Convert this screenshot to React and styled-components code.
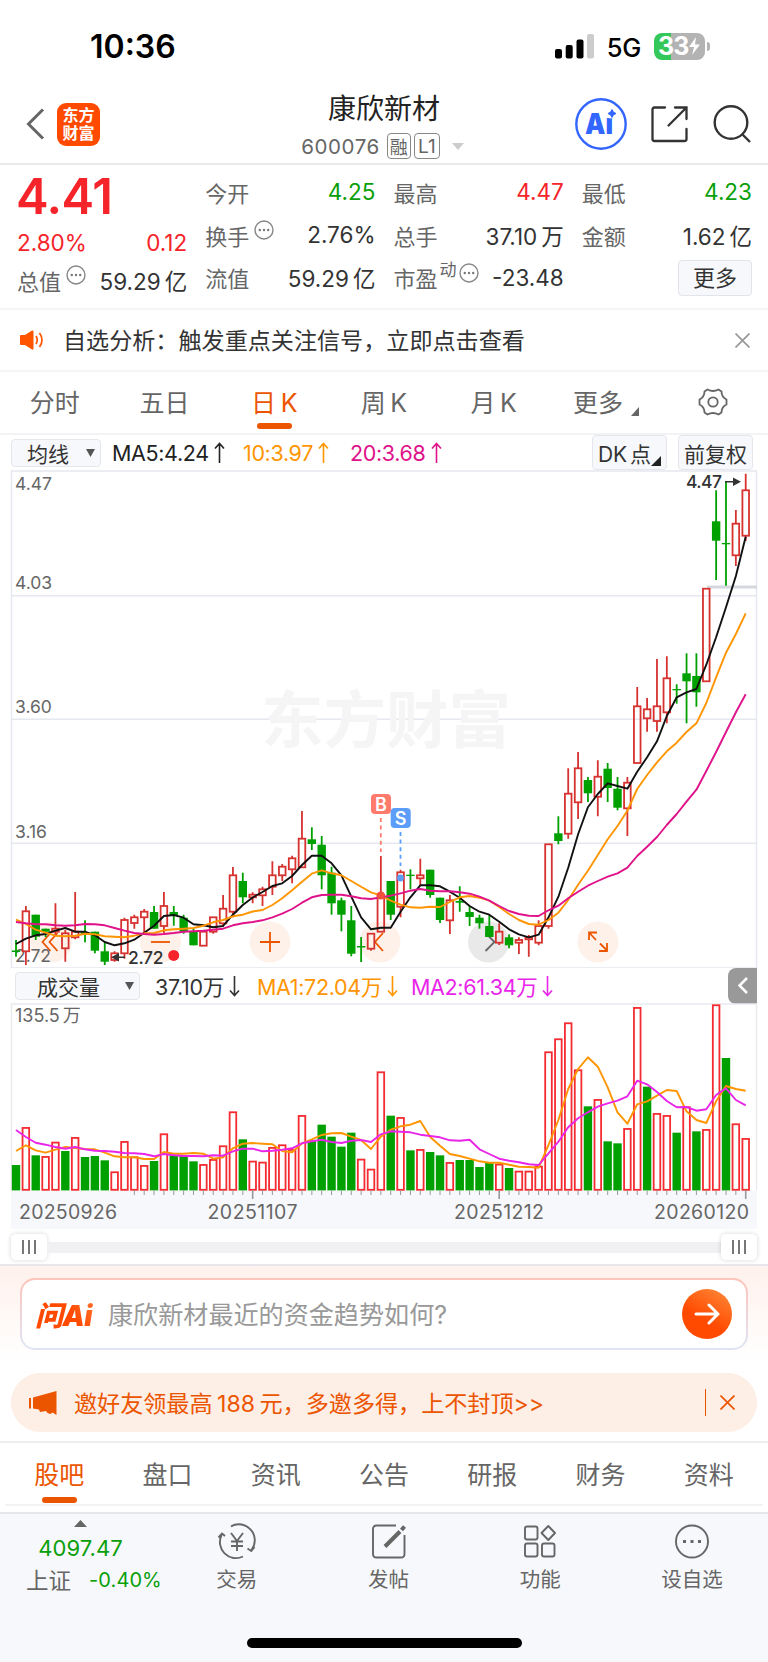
import React from 'react';
import styled, { createGlobalStyle } from 'styled-components';

const GlobalStyle = createGlobalStyle`
  * {
    box-sizing: border-box;
  }
  body {
    margin: 0;
    background: #fff;
    font-family: Inter, "Noto Sans CJK SC", sans-serif;
    color: #333;
  }
  svg {
    display: block;
    flex: none;
  }
`;

const RED = '#f5242a';
const GREEN = '#0a9f0a';
const ORANGE = '#ec5500';

const Page = styled.div`
  width: 768px;
  height: 1662px;
  overflow: hidden;
  display: flex;
  flex-direction: column;
`;

/* ---------- status bar ---------- */

const StatusBar = styled.div`
  height: 92px;
  padding: 0 58px 0 90px;
  display: flex;
  align-items: center;
  flex: none;
  color: #000;
`;

const Clock = styled.div`
  font-size: 32px;
  font-weight: 600;
  letter-spacing: 0;
  margin-right: auto;
`;

const Network = styled.div`
  font-size: 25.5px;
  font-weight: 500;
  letter-spacing: -0.3px;
  margin: 2px 13px 0 13px;
`;

const Battery = styled.div`
  width: 51px;
  height: 27px;
  border-radius: 8px;
  background: linear-gradient(90deg, #34c759 17px, #b3b3b3 17px);
  color: #fff;
  font-size: 25px;
  font-weight: 700;
  letter-spacing: -1px;
  display: flex;
  align-items: center;
  padding-left: 4px;
`;

const BatteryTip = styled.div`
  width: 3px;
  height: 9px;
  margin-left: 2px;
  border-radius: 0 3px 3px 0;
  background: #b3b3b3;
`;

/* ---------- header ---------- */

const Header = styled.header`
  height: 73px;
  flex: none;
  display: grid;
  grid-template-columns: 232px 1fr 232px;
  border-bottom: 2px solid #ebebed;
`;

const HeaderSide = styled.div`
  display: flex;
  align-items: center;
  height: 64px;
  padding: ${(p) => (p.$right ? '0 17px 0 39px' : '0 0 0 26px')};
  gap: ${(p) => (p.$right ? '24px' : '12px')};
`;

const Logo = styled.div`
  width: 43px;
  height: 43px;
  border-radius: 9px;
  background: #ff4a00;
  color: #fff;
  font-size: 16px;
  line-height: 18px;
  font-weight: 700;
  display: flex;
  align-items: center;
  justify-content: center;
  text-align: center;
`;

const TitleBlock = styled.div`
  display: flex;
  flex-direction: column;
  align-items: center;
`;

const Title = styled.h1`
  margin: 0;
  font-size: 28px;
  line-height: 35px;
  font-weight: 400;
  color: #222;
`;

const Code = styled.div`
  display: flex;
  align-items: center;
  height: 30px;
  margin-top: 4px;
  margin-right: 2px;
  gap: 3px;
  font-size: 20.5px;
  color: #666;
  letter-spacing: 0.6px;
`;

const Tag = styled.span`
  height: 26px;
  width: ${(p) => p.$w}px;
  margin-left: ${(p) => p.$ml || 0}px;
  border: 1.5px solid #888;
  border-radius: 4px;
  font-size: ${(p) => p.$size}px;
  display: flex;
  align-items: center;
  justify-content: center;
  letter-spacing: 0;
`;

/* ---------- quote ---------- */

const Quote = styled.section`
  height: 145px;
  flex: none;
  padding: 5px 16px 0 17px;
  display: grid;
  grid-template-columns: repeat(4, 1fr);
  gap: 18px;
  border-bottom: 2px solid #f5f5f6;
`;

const Column = styled.div`
  display: flex;
  flex-direction: column;
`;

const Price = styled.div`
  height: 51px;
  line-height: 53px;
  font-size: 49px;
  font-weight: 600;
  letter-spacing: -0.5px;
  margin-left: -1px;
  color: ${RED};
`;

const Cell = styled.div`
  height: ${(p) => p.$h || 43.3}px;
  display: flex;
  align-items: center;
  justify-content: space-between;
  font-size: 22.5px;
  letter-spacing: 0;
  white-space: nowrap;
  color: ${(p) => p.$color || '#333'};
`;

const Unit = styled.span`
  margin-left: 4px;
`;

const Label = styled.span`
  display: flex;
  align-items: center;
  gap: ${(p) => (p.$tight ? 2 : 5)}px;
  font-size: 22px;
  letter-spacing: 0;
  color: #666;
  sup {
    font-size: 17px;
    line-height: 17px;
    margin-top: -14px;
  }
  svg {
    margin-top: -9px;
  }
`;

const MoreButton = styled.button`
  width: 74px;
  height: 36px;
  margin: 3px 0 0 auto;
  border: 1.5px solid #e2e4ea;
  border-radius: 4px;
  background: #f7f8fb;
  font: inherit;
  font-size: 22px;
  line-height: 30px;
  padding: 0;
  color: #333;
`;

/* ---------- notice ---------- */

const Notice = styled.div`
  height: 62px;
  flex: none;
  padding: 0 18px 0 20px;
  display: flex;
  align-items: center;
  border-bottom: 2px solid #f5f5f6;
  font-size: 23.1px;
  color: #333;
`;

const NoticeText = styled.div`
  flex: 1;
  margin: -2px 0 0 19px;
`;

/* ---------- tabs ---------- */

const Tabs = styled.nav`
  height: ${(p) => p.$h}px;
  flex: none;
  display: grid;
  grid-template-columns: repeat(7, 1fr);
  margin: 0 ${(p) => p.$inset || 0}px;
  border-bottom: 2px solid #f3f3f6;
`;

const Tab = styled.div`
  display: flex;
  flex-direction: column;
  align-items: center;
  font-size: 25px;
  line-height: 36px;
  word-spacing: -2.5px;
  padding-top: ${(p) => p.$top}px;
  color: ${(p) => (p.$active ? ORANGE : '#666')};
  &::after {
    content: '';
    width: 35px;
    height: 6px;
    margin-top: ${(p) => p.$gap}px;
    border-radius: 3px;
    background: ${(p) => (p.$active ? ORANGE : 'transparent')};
  }
`;

const TabLabel = styled.span`
  display: flex;
  align-items: flex-end;
  gap: 8px;
  min-height: 36px;
  padding-left: ${(p) => (p.$more ? 5 : 0)}px;
  white-space: nowrap;
`;

/* ---------- indicators ---------- */

const IndicatorRow = styled.div`
  height: 35px;
  flex: none;
  display: flex;
  align-items: center;
  padding: 0 ${(p) => p.$right}px 0 ${(p) => p.$left}px;
  font-size: 21.5px;
`;

const Select = styled.div`
  width: ${(p) => p.$w}px;
  height: 28px;
  margin-right: ${(p) => p.$mr}px;
  padding: 0 5px 0 ${(p) => p.$pl}px;
  border: 1.5px solid #e4e6ec;
  border-radius: 4px;
  background: #f7f8fb;
  display: flex;
  align-items: center;
  justify-content: space-between;
  font-size: 21px;
`;

const Ma = styled.span`
  display: flex;
  align-items: center;
  gap: 5px;
  width: ${(p) => p.$w}px;
  letter-spacing: -0.35px;
  white-space: nowrap;
  color: ${(p) => p.$color};
`;

const ChartButton = styled.div`
  width: 75px;
  height: 35px;
  margin-left: ${(p) => (p.$first ? 'auto' : '11px')};
  border: 1.5px solid #e4e6ec;
  border-radius: 4px;
  background: #f7f8fb;
  display: flex;
  align-items: center;
  justify-content: center;
  white-space: nowrap;
  font-size: 21px;
  word-spacing: -3px;
`;

const Collapse = styled.div`
  width: 29px;
  height: 36px;
  margin-left: auto;
  border-radius: 8px 0 0 8px;
  background: #999;
  display: flex;
  align-items: center;
  justify-content: center;
`;

const SliderRow = styled.div`
  height: 35px;
  flex: none;
  padding: 1px 11px 0;
  display: flex;
  align-items: center;
`;

const Track = styled.div`
  flex: 1;
  height: 11px;
  background: #f1f1f4;
`;

const Handle = styled.div`
  width: 36px;
  height: 26px;
  border-radius: 5px;
  background: #fff;
  box-shadow: 0 0 5px rgba(0, 0, 0, 0.16);
  display: flex;
  align-items: center;
  justify-content: center;
  gap: 4px;
  i {
    width: 2px;
    height: 14px;
    background: #777;
  }
`;

/* ---------- ask + promo ---------- */

const AskBand = styled.div`
  height: 97px;
  flex: none;
  padding: 12px 20px 0;
  border-top: 2px solid #e8e6ec;
  background: linear-gradient(#fff1ec, #fff);
`;

const AskBox = styled.div`
  height: 72px;
  border: 2px solid transparent;
  border-radius: 15px;
  background: linear-gradient(#fff, #fff) padding-box, linear-gradient(#ffc3ba, #dfe5f7) border-box;
  display: flex;
  align-items: center;
  padding: 0 14px 0 13px;
`;

const AskLogo = styled.div`
  width: 73px;
  font-size: 28px;
  font-weight: 900;
  font-style: italic;
  letter-spacing: -0.5px;
  white-space: nowrap;
  color: transparent;
  background: linear-gradient(60deg, #ff4a00 50%, #ff8a4a);
  background-clip: text;
`;

const Placeholder = styled.div`
  flex: 1;
  margin-top: -2px;
  font-size: 25.1px;
  color: #999;
`;

const Send = styled.div`
  width: 50px;
  height: 50px;
  border-radius: 50%;
  background: linear-gradient(30deg, #ff4a00 40%, #ff8d3c);
  display: flex;
  align-items: center;
  justify-content: center;
`;

const Promo = styled.div`
  height: 59px;
  flex: none;
  margin: 12px 11px 9px;
  padding: 0 22px 0 18px;
  border-radius: 30px;
  background: #fdeee6;
  color: ${ORANGE};
  font-size: 23.1px;
  word-spacing: -2px;
  display: flex;
  align-items: center;
`;

const PromoText = styled.div`
  flex: 1;
  margin: -2px 0 0 17px;
`;

const Divider = styled.div`
  width: 1.5px;
  height: 27px;
  margin-right: 14px;
  background: ${ORANGE};
`;

/* ---------- bottom bar ---------- */

const Rule = styled.div`
  height: 2px;
  flex: none;
  background: #eeeef0;
`;

const BottomBar = styled.footer`
  flex: 1;
  margin-top: 6px;
  border-top: 2px solid #e6e7ea;
  background: #f7f8fb;
  display: flex;
  flex-direction: column;
`;

const BottomItems = styled.div`
  display: grid;
  grid-template-columns: 161px repeat(4, 151.7px);
`;

const Index = styled.div`
  padding-top: 6px;
  display: flex;
  flex-direction: column;
  align-items: center;
  color: ${GREEN};
  font-size: 22px;
  letter-spacing: 0.1px;
`;

const IndexRow = styled.div`
  display: flex;
  align-items: center;
  gap: 18px;
  padding-left: 26px;
  width: 100%;
  height: 32px;
  font-size: 20px;
  white-space: nowrap;
  span {
    font-size: 22.5px;
    margin-top: -2px;
    letter-spacing: 0;
    color: #666;
  }
`;

const IndexValue = styled.div`
  height: 30px;
  line-height: 30px;
  margin: 6px 0 1px;
`;

const BottomItem = styled.div`
  display: flex;
  flex-direction: column;
  align-items: center;
  padding-top: 9px;
  gap: 4px;
  font-size: 20.5px;
  line-height: 32px;
  color: #666;
`;

const HomeIndicator = styled.div`
  width: 275px;
  height: 10px;
  margin: auto auto 14px 247px;
  border-radius: 5px;
  background: #000;
`;

/* ---------- chart data: [up, high, top, bottom, low], pixels inside the plot ---------- */

const STEP = 9.861;
const cx = (i) => 16 + STEP * i;

const candles = [
  [0, 940, 950.5, 952, 956.7], [1, 906, 911.3, 951.3, 965], [0, 914.7, 914.7, 936.7, 940],
  [0, 928.7, 928.7, 931.7, 937], [1, 903.3, 928.7, 931.7, 935], [1, 930, 933.3, 948.3, 961.7],
  [1, 892, 931.7, 937.3, 939.3], [0, 920.3, 932.3, 934, 942.3], [0, 931.7, 931.7, 950.7, 953.3],
  [0, 942.7, 951.3, 961.7, 965], [1, 951.3, 953.3, 960, 961.7], [1, 917.7, 920, 953.3, 958.7],
  [1, 914.7, 917.3, 923, 928.7], [1, 909, 911.7, 917.3, 933.3], [0, 906, 912, 928.7, 928.7],
  [1, 892, 906, 926, 933], [0, 906, 912, 916, 925.7], [0, 914.7, 917.7, 931.7, 933.7],
  [0, 928.7, 931.7, 945.3, 945.3], [1, 931.7, 931.7, 945.7, 945.7], [1, 917.3, 917.3, 931.7, 933.7],
  [1, 895, 908.7, 923.3, 926.7], [1, 867, 875.3, 911.7, 917.3], [0, 872.7, 881, 897.3, 903.3],
  [1, 892.3, 894.7, 897.3, 903.3], [1, 886.7, 889.3, 895.3, 906], [1, 861.3, 875.3, 886.7, 895],
  [1, 864, 866.7, 875.3, 881], [1, 855.7, 858.3, 869.3, 883.3], [1, 811, 838.7, 867.3, 867.3],
  [0, 827.3, 839.3, 844, 850], [0, 836, 844.7, 875.3, 889.3], [0, 866.7, 872.7, 903.3, 914.7],
  [0, 897.7, 900.3, 914.7, 931.3], [0, 906, 920.3, 953.7, 956.3], [0, 937, 946, 947.5, 962],
  [1, 933.7, 933.7, 948.7, 950.7], [1, 856, 895, 931.7, 931.7], [0, 881, 881, 914.7, 920],
  [1, 869.7, 872.3, 906.7, 917.3], [0, 869.3, 874.7, 876, 889.3], [1, 858.7, 875.3, 878.3, 886],
  [0, 869.7, 869.7, 895, 897.7], [0, 897.7, 897.7, 920, 923], [1, 895, 900.3, 920.3, 934],
  [0, 886.3, 901, 902.7, 911.7], [0, 906, 912, 917, 926], [0, 914.7, 917.7, 923.3, 928.7],
  [0, 914.7, 926, 937, 937], [1, 923.3, 931.7, 942.7, 945], [0, 934.3, 937.3, 945.3, 948.3],
  [1, 937.3, 940, 942.7, 954], [1, 935, 937.3, 939.3, 956.7], [1, 920.3, 926, 942.7, 945.3],
  [1, 844.3, 844.3, 926, 928.7], [0, 816.3, 833.3, 841, 844.3], [1, 768.3, 793.7, 833.7, 838.7],
  [1, 752, 768.3, 802.3, 819], [0, 777, 780, 793.3, 802], [1, 760.3, 776.7, 796.7, 816.3],
  [0, 763, 768.7, 788, 802], [0, 777, 788.7, 807.7, 810.3], [1, 777, 782.7, 808.3, 836],
  [1, 687, 706.3, 763, 763], [1, 698, 709.3, 718.3, 731.7], [1, 659, 706.3, 721, 731.7],
  [1, 656.3, 678.3, 712.3, 723.3], [0, 684.3, 689, 690.3, 703.7], [0, 653.3, 673.3, 681.3, 723.3],
  [0, 653.3, 676, 692.3, 706.7], [1, 588.7, 588.7, 681.3, 681.3], [0, 490.3, 521.3, 540.7, 580],
  [0, 481.7, 543, 544.3, 585.7], [1, 510, 523.7, 555.3, 566], [1, 473.7, 490.3, 535.7, 541],
];

const ma5 = [
  944, 938.7, 935.3, 934, 930.7, 928, 931.7, 931.7, 935.3, 942, 945.3, 943.3, 939.7, 932.7, 925.7, 916, 915,
  917.7, 924.3, 925.3, 927.3, 926, 914.7, 905, 897.5, 892, 886, 883.3, 876, 865, 855.7, 855.7, 863.3, 875.3,
  896.7, 917.3, 929.3, 927.7, 927.7, 911.7, 897.3, 885.3, 885.3, 886.3, 891.7, 897.7, 906, 911.7, 914.7, 921.7,
  929.3, 934.3, 937.3, 934.7, 917.3, 896.7, 867.7, 834.3, 807.3, 794, 783.3, 786, 788.7, 771.7, 757.3, 741.3,
  716, 697.3, 692.3, 689, 664.7, 637.3, 607.3, 576, 536.7,
];

const ma10 = [
  919.7, 924, 929.7, 932.7, 935.7, 936.3, 935.7, 933.7, 934.3, 936.3, 936.7, 937.3, 935.7, 933.3, 933, 930.3,
  929.3, 928.7, 928, 925.7, 922.3, 920, 916.3, 914.7, 911.5, 910, 905, 898.3, 890.3, 881.7, 873.7, 870.3, 873.3,
  875.3, 881, 886.7, 892.3, 895.3, 900.7, 904.7, 907.3, 907.7, 906.7, 907, 902, 897.3, 896, 897.7, 900.7, 907,
  914, 920, 924, 924.7, 920, 912.7, 900, 884.7, 870.7, 855, 839.3, 826, 810.7, 789, 775, 762.3, 751.3, 742.7,
  732, 723.3, 703, 677.3, 652.7, 634, 613.3,
];

const ma20 = [
  922, 923.3, 924.3, 924.3, 925.3, 925.7, 925.3, 924, 924.3, 925.3, 928, 930.7, 933, 934, 934.7, 934, 933,
  931.7, 931.3, 930.7, 929.7, 928.7, 925.3, 923.3, 922, 920.3, 917.3, 913.7, 909, 902.7, 897.3, 895, 894.7,
  894.7, 896.3, 898.3, 899, 897.3, 895.7, 893.3, 890.7, 889, 890.7, 891.3, 891.3, 892.3, 893.7, 896.7, 900.7,
  906, 911, 914, 915.7, 916, 910.3, 905.7, 898.3, 891.7, 885.7, 881, 876.7, 873.3, 867.7, 856, 846.7, 837, 825,
  814, 801.7, 789.7, 771, 752, 732, 712.3, 694.3,
];

// bar tops, in thirds of a pixel under the volume header; sign tells green from red
const volumes = [
  -585, 472, -556, 559, 516, -543, 502, -561, -558, -571, 605, 514, 560, 586, -573, 491, -556, -556, -574, 583,
  568, 527, 425, -508, 573, 576, 532, 524, 538, 436, -511, -464, -500, -530, -488, 567, 597, 305, -437, 442,
  -541, 538, -546, -556, 577, -570, -570, -591, -579, 582, -594, 603, 603, 588, 245, 206, 158, 299, -409, 388,
  -514, -520, 475, 112, -350, 430, 436, -488, 410, -484, 478, 104, -264, 461, 505,
];

const vma1 = [
  543, 526, 541, 548, 539, 531, 534, 537, 538, 548, 559, 562, 562, 567, 567, 546, 551, 551, 549, 551, 566, 562,
  535, 521, 519, 521, 523, 543, 547, 520, 508, 495, 490, 489, 500, 510, 537, 500, 479, 469, 464, 453, 501, 527,
  552, 558, 566, 574, 578, 578, 584, 590, 591, 593, 525, 450, 357, 297, 262, 290, 352, 427, 461, 403, 394, 377,
  360, 363, 424, 450, 459, 394, 348, 357, 362,
];

const vma2 = [
  480, 501, 518, 524, 531, 536, 531, 538, 542, 543, 545, 549, 550, 552, 559, 552, 556, 558, 558, 559, 556, 557,
  544, 536, 536, 544, 542, 539, 535, 520, 514, 509, 516, 519, 512, 510, 516, 493, 484, 485, 487, 494, 498, 502,
  511, 512, 509, 538, 552, 566, 572, 577, 583, 585, 550, 515, 472, 445, 427, 410, 400, 392, 379, 332, 343, 366,
  393, 412, 411, 422, 418, 375, 355, 390, 406,
];

const points = (values, map = (v) => v) => values.map((v, i) => `${cx(i).toFixed(1)},${map(v).toFixed(1)}`).join(' ');
const volY = (v) => 970 + v / 3;

/* ---------- small drawings ---------- */

const Dots = () => (
  <svg width="20" height="20" viewBox="0 0 20 20">
    <circle cx="10" cy="10" r="9" fill="none" stroke="#888" strokeWidth="1.4" />
    <circle cx="5.8" cy="10" r="1.2" fill="#777" />
    <circle cx="10" cy="10" r="1.2" fill="#777" />
    <circle cx="14.2" cy="10" r="1.2" fill="#777" />
  </svg>
);

const Arrow = ({ down }) => (
  <svg width="11" height="22" viewBox="0 0 11 22" fill="none" stroke="currentColor" strokeWidth="1.6">
    <path d={down ? 'M5.5 1V20M1 15.5L5.5 20.5L10 15.5' : 'M5.5 21V2M1 6.5L5.5 1.5L10 6.5'} />
  </svg>
);

const Caret = ({ w = 9, h = 8, up, color = '#555' }) => (
  <svg width={w} height={h}>
    <path d={up ? `M0 ${h}H${w}L${w / 2} 0Z` : `M0 0H${w}L${w / 2} ${h}Z`} fill={color} />
  </svg>
);

const Cross = ({ size = 14, color, sw = 1.6 }) => (
  <svg width={size} height={size} viewBox="0 0 14 14" stroke={color} strokeWidth={sw}>
    <path d="M.5 .5L13.5 13.5M13.5 .5L.5 13.5" />
  </svg>
);

const AxisText = ({ x, y, children, size = 17.5, ...rest }) => (
  <text x={x} y={y} fontSize={size} fill="#666" {...rest}>{children}</text>
);

const Bubble = ({ x, gray, d }) => (
  <g>
    <circle cx={x} cy="942" r="20.5" fill={gray ? '#e9e9e9' : '#fef1ea'} />
    <path d={d} fill="none" stroke={gray ? '#666' : ORANGE} strokeWidth="1.8" />
  </g>
);

const PriceChart = () => (
  <svg width="768" height="498" viewBox="0 470 768 498">
    <g fill="none" stroke="#e6e8f0" strokeWidth="1.5">
      <path d="M11.5 968V471H756.5V968" />
      <path d="M11 595.7H757M11 719.3H757M11 843.3H757M11 968H757" />
    </g>
    <text x="261" y="743" fontSize="62.5" fontWeight="700" fill="#f5f5f6">东方财富</text>
    <Bubble x={51.5} d="M50.5 933L42.5 942L50.5 951M57.5 933L49.5 942L57.5 951" />
    <Bubble x={160.5} d="M151 942H170" />
    <Bubble x={270} d="M260 942H280M270 932V952" />
    <Bubble x={380} d="M383 933L375 942L383 951" />
    <Bubble x={488.5} gray d="M485.5 933L494.5 942L485.5 951" />
    <Bubble x={598} d="M589 940V932.5H597M589 932.5L596 940M600 943.5L607 950.5M607 943V951H599" />
    <path d="M707 587H757" stroke="#d5d8de" strokeWidth="3" />
    <AxisText x="15" y="489.5">4.47</AxisText>
    <AxisText x="15" y="589">4.03</AxisText>
    <AxisText x="15" y="713">3.60</AxisText>
    <AxisText x="15" y="838">3.16</AxisText>
    <AxisText x="15" y="962">2.72</AxisText>
    {candles.map(([up, high, top, bottom, low], i) =>
      up ? (
        <g key={i} stroke="#d6322f" strokeWidth="1.8" fill="none">
          <path d={`M${cx(i)} ${high}V${top}M${cx(i)} ${bottom}V${low}`} />
          <rect x={cx(i) - 3.3} y={top} width="6.6" height={bottom - top} />
        </g>
      ) : (
        <g key={i} fill="#00a000">
          <rect x={cx(i) - 0.9} y={high} width="1.8" height={low - high} />
          <rect x={cx(i) - 4.2} y={top} width="8.4" height={bottom - top} />
        </g>
      )
    )}
    <g fill="none" strokeWidth="1.9" strokeLinejoin="round">
      <polyline points={points(ma5)} stroke="#111" />
      <polyline points={points(ma10)} stroke="#ff9500" />
      <polyline points={points(ma20)} stroke="#e0128a" />
    </g>
    <path d="M380.8 818V852" stroke="#ff7a6b" strokeWidth="1.8" strokeDasharray="4 3.6" />
    <path d="M400.5 832V866" stroke="#5b9df8" strokeWidth="1.8" strokeDasharray="4 3.6" />
    <circle cx="380.8" cy="895.5" r="4" fill="#f2503f" />
    <circle cx="400.5" cy="878" r="3.4" fill="#5b9df8" />
    <rect x="371" y="794" width="20" height="20" rx="4" fill="#ff7a6b" />
    <rect x="390.7" y="808" width="20" height="20" rx="4" fill="#5b9df8" />
    <g fill="#fff" fontSize="18" fontWeight="600" textAnchor="middle">
      <text x="381" y="810.5">B</text>
      <text x="400.7" y="824.5">S</text>
    </g>
    <g fill="#333" fontSize="17.5" fontWeight="500">
      <text x="128" y="963.5" textLength="35.5">2.72</text>
      <text x="686" y="488" textLength="36">4.47</text>
      <path d="M119 953L111 957.2L119 961.5ZM733 477.5L741 481.7L733 486Z" />
      <path d="M125 957.2H117M725 481.7H735" stroke="#333" strokeWidth="1.6" />
    </g>
    <circle cx="173.7" cy="955.4" r="5.5" fill={RED} />
  </svg>
);

const VolumeChart = () => (
  <svg width="768" height="226" viewBox="0 1003 768 226">
    <rect x="11" y="1190" width="746" height="40" fill="#f7f8fb" />
    <path d="M11.5 1190V1004H756.5V1190" fill="none" stroke="#e9eaee" strokeWidth="1.5" />
    <AxisText x="15" y="1021.5" size={18}>135.5<tspan dx="3">万</tspan></AxisText>
    {volumes.map((v, i) => {
      const y = volY(Math.abs(v));
      return v > 0 ? (
        <rect key={i} x={cx(i) - 3.3} y={y + 0.6} width="6.6" height={1189.2 - y} fill="none" stroke="#f42c31" strokeWidth="1.8" />
      ) : (
        <rect key={i} x={cx(i) - 4.2} y={y} width="8.4" height={1190.4 - y} fill="#00a000" />
      );
    })}
    <g fill="none" strokeWidth="1.9" strokeLinejoin="round">
      <polyline points={points(vma1, volY)} stroke="#ff9500" />
      <polyline points={points(vma2, volY)} stroke="#e825e8" />
    </g>
    {volumes.map((v, i) => {
      const major = i === 24 || i === 49 || i === 74;
      return i > 11 && (
        <path key={i} d={`M${cx(i)} 1190.5V${major ? 1199 : 1195}`} stroke="#999" strokeWidth={major ? 1.6 : 1} />
      );
    })}
    <AxisText x="19" y="1218.5" size={19.5} textLength="98">20250926</AxisText>
    <AxisText x="207.5" y="1218.5" size={19.5} textLength="90">20251107</AxisText>
    <AxisText x="454" y="1218.5" size={19.5} textLength="90">20251212</AxisText>
    <AxisText x="654" y="1218.5" size={19.5} textLength="95">20260120</AxisText>
  </svg>
);

/* ---------- sections ---------- */

const StockHeader = () => (
  <Header>
    <HeaderSide>
      <svg width="19" height="32" viewBox="0 0 19 32" fill="none" stroke="#666" strokeWidth="3">
        <path d="M17 1.5L2.5 16L17 30.5" />
      </svg>
      <Logo>东方<br />财富</Logo>
    </HeaderSide>
    <TitleBlock>
      <Title>康欣新材</Title>
      <Code>
        600076
        <Tag $w={24} $ml={4} $size={18}>融</Tag>
        <Tag $w={26} $size={19}>L1</Tag>
        <svg width="22" height="8"><path d="M9 1H21L15 8Z" fill="#ccc" /></svg>
      </Code>
    </TitleBlock>
    <HeaderSide $right>
      <svg width="52" height="52" viewBox="0 0 52 52">
        <circle cx="26" cy="26" r="24.7" fill="#fff" stroke="#3366ff" strokeWidth="2.4" />
        <text x="10" y="36" fontSize="29" fontWeight="900" fill="#3366ff" textLength="28" lengthAdjust="spacingAndGlyphs">Ai</text>
        <circle cx="35.5" cy="15.5" r="5" fill="#fff" />
        <path d="M37 11.500Q37.800 14.700 41 15.500Q37.800 16.300 37 19.500Q36.200 16.300 33 15.500Q36.200 14.700 37 11.500Z" fill="#3366ff" stroke="#3366ff" />
      </svg>
      <svg width="37" height="37" viewBox="0 0 37 37" fill="none" stroke="#333" strokeWidth="2.3" strokeLinecap="round">
        <path d="M14 1.500H3.500Q1.500 1.500 1.500 3.500V33Q1.500 35 3.500 35H33.500Q35.500 35 35.500 33V23" />
        <path d="M24 1.500H35.500V13M34.500 2.500L17.500 19.500" />
      </svg>
      <svg width="39" height="38" viewBox="0 0 39 38" fill="none" stroke="#333" strokeWidth="2.4">
        <circle cx="19" cy="17.5" r="16.3" />
        <path d="M30 29L38 37" />
      </svg>
    </HeaderSide>
  </Header>
);

const QuotePanel = () => (
  <Quote>
    <Column>
      <Price>4.41</Price>
      <Cell $h={43} $color={RED}><span>2.80%</span><span>0.12</span></Cell>
      <Cell $h={31}><Label>总值<Dots /></Label><span>59.29<Unit>亿</Unit></span></Cell>
    </Column>
    <Column>
      <Cell $color={GREEN}><Label>今开</Label><span>4.25</span></Cell>
      <Cell><Label>换手<Dots /></Label><span>2.76%</span></Cell>
      <Cell $h={41}><Label>流值</Label><span>59.29<Unit>亿</Unit></span></Cell>
    </Column>
    <Column>
      <Cell $color={RED}><Label>最高</Label><span>4.47</span></Cell>
      <Cell><Label>总手</Label><span>37.10<Unit>万</Unit></span></Cell>
      <Cell $h={41}><Label $tight>市盈<sup>动</sup><Dots /></Label><span>-23.48</span></Cell>
    </Column>
    <Column>
      <Cell $color={GREEN}><Label>最低</Label><span>4.23</span></Cell>
      <Cell><Label>金额</Label><span>1.62<Unit>亿</Unit></span></Cell>
      <MoreButton>更多</MoreButton>
    </Column>
  </Quote>
);

const periods = ['分时', '五日', '日 K', '周 K', '月 K', '更多'];
const sections = ['股吧', '盘口', '资讯', '公告', '研报', '财务', '资料'];

const bottomItems = [
  {
    label: '交易',
    icon: (
      <>
        <path d="M14 3.3A16 16 0 0 1 34.5 27M37.5 24L34.3 28L30.5 25.5M26 33.5A16 16 0 0 1 4.6 12M1.5 14.5L5 10.5L8 13" />
        <path d="M14 10L20 18L26 10M20 18V28M14 18.5H26M14 23H26" />
      </>
    ),
  },
  {
    label: '发帖',
    icon: (
      <>
        <path d="M27 2.5H7.5Q4 2.5 4 6V31Q4 34.5 7.5 34.5H32Q35.5 34.5 35.5 31V12" />
        <path d="M16 23.5L31 8.5" strokeWidth="4" />
        <path d="M32.5 7L35.5 3.5" strokeWidth="4" />
      </>
    ),
  },
  {
    label: '功能',
    icon: (
      <>
        <rect x="5" y="3.5" width="12.5" height="13" rx="2" />
        <rect x="5" y="20.5" width="12.5" height="13" rx="2" />
        <rect x="22" y="20.5" width="12.5" height="13" rx="2" />
        <path d="M28.3 3L35 10L28.3 17L21.5 10Z" strokeLinejoin="round" />
      </>
    ),
  },
  {
    label: '设自选',
    icon: (
      <>
        <circle cx="20" cy="18.5" r="16" />
        <path d="M11 18.5H14M18.5 18.5H21.5M26 18.5H29" strokeWidth="3" />
      </>
    ),
  },
];

const App = () => (
  <>
    <GlobalStyle />
    <Page>
      <StatusBar>
        <Clock>10:36</Clock>
        <svg width="39" height="25" viewBox="0 0 39 25">
          <rect x="0" y="15" width="7" height="9.5" rx="2" />
          <rect x="10.7" y="11" width="7" height="13.5" rx="2" />
          <rect x="21.5" y="5.5" width="7" height="19" rx="2" />
          <rect x="32" y="0" width="7" height="24.5" rx="2" fill="#ccc" />
        </svg>
        <Network>5G</Network>
        <Battery>
          33
          <svg width="13" height="18" viewBox="0 0 13 18"><path d="M8 0L1 10H6L4 18L12 7.5H7Z" fill="#fff" /></svg>
        </Battery>
        <BatteryTip />
      </StatusBar>

      <StockHeader />
      <QuotePanel />

      <Notice>
        <svg width="24" height="20" viewBox="0 0 24 20">
          <path d="M0 6Q0 5 1 5H5L12 .5Q13.5 0 13.5 1.5V18.5Q13.5 20 12 19.5L5 15H1Q0 15 0 14Z" fill="#ff5500" />
          <path d="M16 6Q18.5 10 16 14M19.5 3Q24.5 10 19.5 17" fill="none" stroke="#ff5500" strokeWidth="1.7" />
        </svg>
        <NoticeText>自选分析：触发重点关注信号，立即点击查看</NoticeText>
        <Cross color="#999" size={15} />
      </Notice>

      <Tabs $h={63}>
        {periods.map((label, i) => (
          <Tab key={label} $active={i === 2} $top={13} $gap={2}>
            <TabLabel $more={i === 5}>
              {label}
              {i === 5 && <svg width="8" height="16"><path d="M8 2V11H0Z" fill="#666" /></svg>}
            </TabLabel>
          </Tab>
        ))}
        <Tab $top={16} $gap={0}>
          <svg width="30" height="28" viewBox="0 0 30 28" fill="none" stroke="#666" strokeWidth="1.8">
            <path d="M9.5 1.5Q15 4.5 20.5 1.5L23.5 3.5Q23.5 9 28.5 11.5V16.5Q23.5 19 23.5 24.5L20.5 26.5Q15 23.5 9.5 26.5L6.5 24.5Q6.5 19 1.5 16.5V11.5Q6.5 9 6.5 3.5Z" strokeLinejoin="round" />
            <circle cx="15" cy="14" r="4.7" />
          </svg>
        </Tab>
      </Tabs>

      <IndicatorRow $left={11} $right={15}>
        <Select $w={90} $mr={11} $pl={15}>
          均线
          <Caret />
        </Select>
        <Ma $w={131} $color="#222">MA5:4.24<Arrow /></Ma>
        <Ma $w={107} $color="#ff9500">10:3.97<Arrow /></Ma>
        <Ma $w={110} $color="#e0128a">20:3.68<Arrow /></Ma>
        <ChartButton $first>
          DK 点
          <svg width="10" height="26"><path d="M10 16V26H0Z" fill="#222" /></svg>
        </ChartButton>
        <ChartButton>前复权</ChartButton>
      </IndicatorRow>

      <PriceChart />

      <IndicatorRow $left={15} $right={11}>
        <Select $w={125} $mr={15} $pl={21}>
          成交量
          <Caret />
        </Select>
        <Ma $w={102} $color="#333">37.10万<Arrow down /></Ma>
        <Ma $w={154} $color="#ff9500">MA1:72.04万<Arrow down /></Ma>
        <Ma $w={150} $color="#e825e8">MA2:61.34万<Arrow down /></Ma>
        <Collapse>
          <svg width="10" height="17" viewBox="0 0 10 17" fill="none" stroke="#fff" strokeWidth="2.5"><path d="M9 1L1.5 8.5L9 16" /></svg>
        </Collapse>
      </IndicatorRow>

      <VolumeChart />

      <SliderRow>
        <Handle><i /><i /><i /></Handle>
        <Track />
        <Handle><i /><i /><i /></Handle>
      </SliderRow>

      <AskBand>
        <AskBox>
          <AskLogo>问Ai</AskLogo>
          <Placeholder>康欣新材最近的资金趋势如何?</Placeholder>
          <Send>
            <svg width="26" height="22" viewBox="0 0 26 22" fill="none" stroke="#fff" strokeWidth="3" strokeLinecap="round">
              <path d="M2 11H24M15 2L24 11L15 20" />
            </svg>
          </Send>
        </AskBox>
      </AskBand>

      <Promo>
        <svg width="28" height="24" viewBox="0 0 28 24" fill={ORANGE}>
          <path d="M0 7H2V17.5H0ZM4 6.5L27.5 0V24L23.5 21.5L21.5 23L18.5 22L17 20L11 21L10 18.5L4 17.5Z" />
        </svg>
        <PromoText>邀好友领最高 188 元，多邀多得，上不封顶&gt;&gt;</PromoText>
        <Divider />
        <Cross color={ORANGE} size={15} />
      </Promo>

      <Rule />
      <Tabs $h={63} $inset={5}>
        {sections.map((label, i) => (
          <Tab key={label} $active={i === 0} $top={14} $gap={4}>
            <TabLabel>{label}</TabLabel>
          </Tab>
        ))}
      </Tabs>

      <BottomBar>
        <BottomItems>
          <Index>
            <Caret up w={13} h={7} color="#666" />
            <IndexValue>4097.47</IndexValue>
            <IndexRow><span>上证</span>-0.40%</IndexRow>
          </Index>
          {bottomItems.map(({ label, icon }) => (
            <BottomItem key={label}>
              <svg width="40" height="37" viewBox="0 0 40 37" fill="none" stroke="#666" strokeWidth="1.9">{icon}</svg>
              {label}
            </BottomItem>
          ))}
        </BottomItems>
        <HomeIndicator />
      </BottomBar>
    </Page>
  </>
);

export default App;
